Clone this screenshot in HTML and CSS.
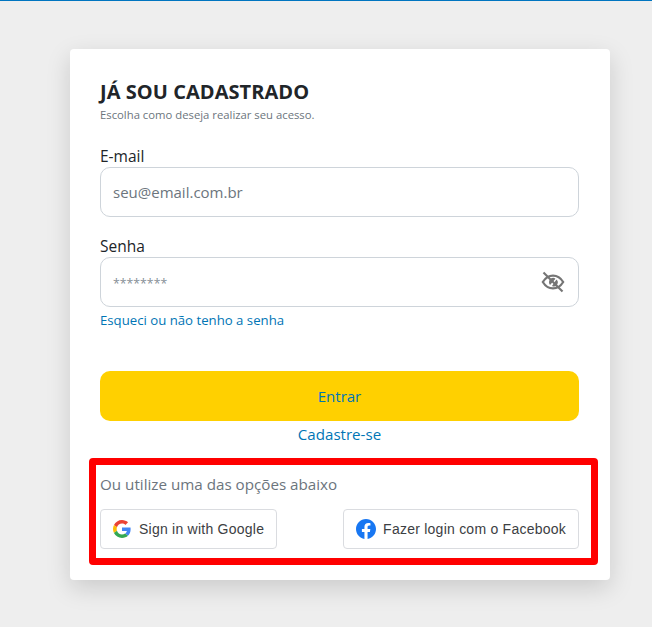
FILE: index.html
```html
<!DOCTYPE html>
<html lang="pt-BR">
<head>
	<meta charset="UTF-8">
	<title>Já sou cadastrado</title>
	<link rel="stylesheet" href="styles.css">
</head>
<body>
	<div class="topline"></div>
	<main class="card">
		<h1 class="title">JÁ SOU CADASTRADO</h1>
		<p class="subtitle">Escolha como deseja realizar seu acesso.</p>

		<label class="field-label" for="email">E-mail</label>
		<input class="field" id="email" type="text" placeholder="seu@email.com.br">

		<label class="field-label second" for="senha">Senha</label>
		<div class="field-wrap">
			<input class="field field-pass" id="senha" type="text" placeholder="********">
			<svg class="eye" width="24" height="24" viewBox="0 0 24 24" fill="none" stroke="#757575" stroke-width="2.2">
				<path d="M1.8 12 C4.5 7.6 8 5.6 12 5.6 C16 5.6 19.5 7.6 22.2 12 C19.5 16.4 16 18.4 12 18.4 C8 18.4 4.5 16.4 1.8 12 Z"/>
				<path d="M8 12 A4 4 0 0 1 14.5 8.8 L9 15 A4 4 0 0 1 8 12 Z" fill="#757575" stroke="none"/>
				<path d="M15.5 9.5 A4 4 0 0 1 11 16 Z" fill="#757575" stroke="none"/>
				<path d="M2.5 2.5 L21.5 21.5" stroke-width="2.2"/>
			</svg>
		</div>
		<a class="link forgot" href="#">Esqueci ou não tenho a senha</a>

		<button class="submit" type="button">Entrar</button>
		<a class="link signup" href="#">Cadastre-se</a>

		<section class="social">
			<p class="social-title">Ou utilize uma das opções abaixo</p>
			<div class="social-row">
				<button class="social-btn" type="button">
					<svg width="18" height="18" viewBox="0 0 48 48">
						<path fill="#EA4335" d="M24 9.5c3.54 0 6.71 1.22 9.21 3.6l6.85-6.85C35.9 2.38 30.47 0 24 0 14.62 0 6.51 5.38 2.56 13.22l7.98 6.19C12.43 13.72 17.74 9.5 24 9.5z"/>
						<path fill="#4285F4" d="M46.98 24.55c0-1.57-.15-3.09-.38-4.55H24v9.02h12.94c-.58 2.96-2.26 5.48-4.78 7.18l7.73 6c4.51-4.18 7.09-10.36 7.09-17.65z"/>
						<path fill="#FBBC05" d="M10.53 28.59c-.48-1.45-.76-2.99-.76-4.59s.27-3.14.76-4.59l-7.98-6.19C.92 16.46 0 20.12 0 24c0 3.88.92 7.54 2.56 10.78l7.97-6.19z"/>
						<path fill="#34A853" d="M24 48c6.48 0 11.93-2.13 15.89-5.81l-7.73-6c-2.15 1.45-4.92 2.3-8.16 2.3-6.26 0-11.57-4.22-13.47-9.91l-7.98 6.19C6.51 42.62 14.62 48 24 48z"/>
					</svg>
					<span>Sign in with Google</span>
				</button>
				<button class="social-btn social-fb" type="button">
					<svg width="20" height="20" viewBox="0 0 24 24">
						<path fill="#1877F2" d="M24 12.07C24 5.4 18.63 0 12 0S0 5.4 0 12.07c0 6.03 4.39 11.02 10.13 11.93v-8.44H7.08v-3.49h3.05V9.41c0-3.02 1.79-4.69 4.53-4.69 1.31 0 2.69.24 2.69.24v2.97h-1.51c-1.49 0-1.96.93-1.96 1.89v2.25h3.33l-.53 3.49h-2.8V24C19.61 23.09 24 18.1 24 12.07z"/>
					</svg>
					<span>Fazer login com o Facebook</span>
				</button>
			</div>
		</section>
	</main>
</body>
</html>
```

FILE: styles.css
```css
* {box-sizing: border-box;}
html, body {margin: 0; padding: 0;}
body {background: #eeeeee; color: #212529; font-family: "Open Sans", "Noto Sans", "Liberation Sans", sans-serif; height: 627px; overflow: hidden;}

.topline {height: 1px; background: #0075c0;}

.card {width: 540px; height: 531px; margin: 48px 0 0 70px; padding: 30px 31px 30px 30px; background: #fff; border-radius: 4px; box-shadow: 0 8px 24px rgba(0, 0, 0, .15);}

.title {margin: 0; padding-top: 1px; font-size: 20px; line-height: 24px; font-weight: 700; letter-spacing: .05px; color: #212529;}
.subtitle {margin: 3px 0 0; font-size: 11.3px; line-height: 16px; color: #6c757d;}

.field-label {display: block; margin-top: 22px; font-size: 15.5px; line-height: 22px;}
.field-label.second {margin-top: 18px;}

.field-wrap {position: relative;}
.field {display: block; width: 100%; height: 50px; padding: 0 12px; border: 1px solid #ced4da; border-radius: 10px; background: #fff; font: inherit; font-size: 15px; outline: none;}
.field::placeholder {color: #6c757d; opacity: 1;}
.field-pass::placeholder {font-size: 12.3px; color: #868e96;}
.eye {position: absolute; right: 14px; top: 13px;}

.link {color: #0075b5; text-decoration: none;}
.forgot {display: block; margin-top: 4px; font-size: 13.2px; line-height: 19px;}

.submit {display: block; width: 100%; height: 50px; margin-top: 41px; border: 0; border-radius: 10px; background: #ffd000; color: #0075b5; font: inherit; font-size: 15px;}
.signup {display: block; margin-top: 2px; text-align: center; font-size: 15.1px; line-height: 22px;}

.social {width: 509px; height: 107px; margin: 13px 0 0 -11px; padding: 7px 12px 0 4px; border: 7px solid #ff0000; border-radius: 4px;}
.social-title {margin: 0; padding-top: 1px; font-size: 15.2px; line-height: 22px; color: #6c757d;}
.social-row {display: flex; justify-content: space-between; margin-top: 14px;}
.social-btn {display: flex; align-items: center; height: 40px; padding: 0 12px; border: 1px solid #dadce0; border-radius: 4px; background: #fff; color: #3c4043; font-family: "Liberation Sans", Arial, sans-serif; font-size: 14px;}
.social-btn span {margin-left: 8px; letter-spacing: .24px;}
.social-fb span {margin-left: 7px;}
```
